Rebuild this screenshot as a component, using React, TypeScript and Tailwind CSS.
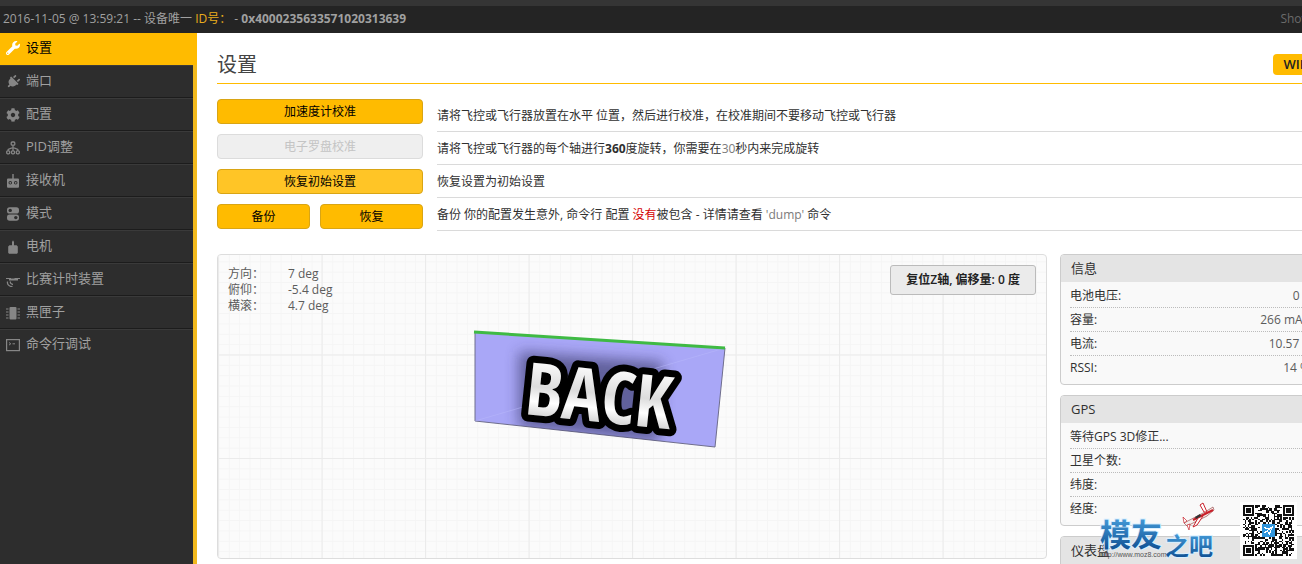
import type { ReactNode } from "react";
import { FaCog, FaPlug, FaWrench } from "react-icons/fa";

const navItems: { label: string; icon: ReactNode }[] = [
  { label: "设置", icon: <FaWrench className="h-3.5 w-3.5" /> },
  { label: "端口", icon: <FaPlug className="h-3.5 w-3.5 rotate-45" /> },
  { label: "配置", icon: <FaCog className="h-3.5 w-3.5" /> },
  { label: "PID调整", icon: <TreeIcon /> },
  { label: "接收机", icon: <ReceiverIcon /> },
  { label: "模式", icon: <ModesIcon /> },
  { label: "电机", icon: <MotorIcon /> },
  { label: "比赛计时装置", icon: <TransponderIcon /> },
  { label: "黑匣子", icon: <ChipIcon /> },
  { label: "命令行调试", icon: <TerminalIcon /> },
];

const attitude = [
  ["方向：", "7 deg"],
  ["俯仰：", "-5.4 deg"],
  ["横滚：", "4.7 deg"],
];

const infoRows = [
  ["电池电压:", "0 V"],
  ["容量:", "266 mAh"],
  ["电流:", "10.57 A"],
  ["RSSI:", "14 %"],
];

const gpsRows = [
  ["等待GPS 3D修正...", ""],
  ["卫星个数:", ""],
  ["纬度:", ""],
  ["经度:", ""],
];

function TreeIcon() {
  return (
    <svg viewBox="0 0 14 14" className="h-3.5 w-3.5" fill="none" stroke="currentColor" strokeWidth="1.3" aria-hidden>
      <rect x="5.2" y="1" width="3.6" height="3.2" rx="1" />
      <rect x="0.7" y="9.8" width="3" height="3" rx="1" />
      <rect x="5.5" y="9.8" width="3" height="3" rx="1" />
      <rect x="10.3" y="9.8" width="3" height="3" rx="1" />
      <path d="M7 4.2v5.6M2.2 9.8V8.4L7 6.4l4.8 2v1.4" />
    </svg>
  );
}

function ReceiverIcon() {
  return (
    <svg viewBox="0 0 14 14" className="h-3.5 w-3.5" fill="currentColor" aria-hidden>
      <path
        fillRule="evenodd"
        d="M6.3 0h1.4v4.5H12a1 1 0 0 1 1 1v7.3a1 1 0 0 1-1 1H2a1 1 0 0 1-1-1V5.5a1 1 0 0 1 1-1h4.3zM4.3 7a1.8 1.8 0 1 0 0 3.6 1.8 1.8 0 0 0 0-3.6zm5.4 0a1.8 1.8 0 1 0 0 3.6 1.8 1.8 0 0 0 0-3.6z"
      />
      <circle cx="4.3" cy="8.8" r="0.9" />
      <circle cx="9.7" cy="8.8" r="0.9" />
    </svg>
  );
}

function ModesIcon() {
  return (
    <svg viewBox="0 0 14 14" className="h-3.5 w-3.5" aria-hidden>
      <rect x="1" y="0.3" width="12" height="6.2" rx="2.6" fill="currentColor" />
      <rect x="1" y="7.5" width="12" height="6.2" rx="2.6" fill="currentColor" />
      <circle cx="4.2" cy="3.4" r="1.7" fill="#2d2d2d" />
      <circle cx="9.8" cy="10.6" r="1.7" fill="#2d2d2d" />
    </svg>
  );
}

function MotorIcon() {
  return (
    <svg viewBox="0 0 14 14" className="h-3.5 w-3.5" fill="currentColor" aria-hidden>
      <path d="M6 2 7 .3 8 2v3.3h2.6l1.2 1.2v6.3l-.8.9H3l-.8-.9V6.5l1.2-1.2H6z" />
    </svg>
  );
}

function TransponderIcon() {
  return (
    <svg viewBox="0 0 14 14" className="h-3.5 w-3.5" fill="none" stroke="currentColor" aria-hidden>
      <path d="M0 5.5h5M8.5 5.5H14" strokeWidth="1" />
      <path d="M3 6.5h9" strokeWidth="2" />
      <path d="M4.5 8.5c-.5 1.500.5 2.700 2.500 3M1.500 8.500c-.5 3 1.500 5 5 5.200" strokeWidth="1.3" />
    </svg>
  );
}

function ChipIcon() {
  return (
    <svg viewBox="0 0 14 14" className="h-3.5 w-3.5" fill="currentColor" aria-hidden>
      <rect x="3.5" y="1" width="7" height="12.5" rx="1" />
      <path d="M0 2.5h2.5v1H0zM0 5.5h2.5v1H0zM0 8.5h2.5v1H0zM0 11.5h2.5v1H0zM11.5 2.5H14v1h-2.5zM11.5 5.5H14v1h-2.5zM11.5 8.5H14v1h-2.5zM11.5 11.5H14v1h-2.5z" />
    </svg>
  );
}

function TerminalIcon() {
  return (
    <svg viewBox="0 0 14 14" className="h-3.5 w-3.5" fill="none" stroke="currentColor" aria-hidden>
      <rect x="0.6" y="1.6" width="12.8" height="11" strokeWidth="1.2" />
      <path d="M3 4.5l1.8 1.3L3 7.1M6.5 5.8H9" />
    </svg>
  );
}

function Sidebar() {
  return (
    <nav className="w-[197px] shrink-0 bg-[linear-gradient(to_right,#2d2d2d_193px,#f2b91d_193px)]">
      <ul>
        {navItems.map((item, i) => (
          <li key={item.label} className="group">
            <a
              href="#"
              className={
                i === 0
                  ? "flex h-8 items-center gap-1.5 bg-[#ffbb00] pb-0.5 pl-1.5 text-[13px] text-white"
                  : "mr-1 flex h-[33px] items-center gap-1.5 border-t border-b border-t-[#3a3a3a] border-b-[#1c1c1c] pl-1.5 text-[13px] text-[#868686] group-last:h-[31px] group-last:border-b-0"
              }
            >
              {item.icon}
              <span className={i === 0 ? "text-black" : "pb-0.5 text-[#a0a0a0]"}>{item.label}</span>
            </a>
          </li>
        ))}
      </ul>
    </nav>
  );
}

function Actions() {
  const yellow = "h-[25px] rounded border border-[#d9a514] bg-[#ffbb00] text-xs text-black";
  return (
    <div className="flex w-[206px] shrink-0 flex-col gap-2.5">
      <button className={yellow}>加速度计校准</button>
      <button disabled className="h-[25px] rounded border border-[#dcdcdc] bg-[#efefef] text-xs text-[#c4c4c4]">
        电子罗盘校准
      </button>
      <button className="h-[25px] rounded border border-[#d9a514] bg-[#ffc526] text-xs text-black">恢复初始设置</button>
      <div className="grid grid-cols-[93fr_103fr] gap-2.5">
        <button className={yellow}>备份</button>
        <button className={yellow}>恢复</button>
      </div>
    </div>
  );
}

function Descriptions() {
  const row = "flex h-[33px] items-center border-b border-[#dadada] pt-0.5 whitespace-pre";
  return (
    <div className="flex-1 text-xs text-[#303030]">
      <p className={row}>请将飞控或飞行器放置在水平 位置，然后进行校准，在校准期间不要移动飞控或飞行器</p>
      <p className={row}>
        请将飞控或飞行器的每个轴进行<b>360</b>度旋转，你需要在<span className="text-[#7b7b7b]">30</span>秒内来完成旋转
      </p>
      <p className={row}>恢复设置为初始设置</p>
      <p className={row}>
        备份 你的配置发生意外, 命令行 配置 <span className="text-[#d40000]">没有</span>被包含 - 详情请查看{" "}
        <span className="text-[#7b7b7b]">'dump'</span> 命令
      </p>
    </div>
  );
}

function GridPaper() {
  return (
    <svg className="absolute inset-0 h-full w-full" aria-hidden>
      <defs>
        <pattern id="minor" x="0.5" y="-4" width="10.35" height="10.35" patternUnits="userSpaceOnUse">
          <path d="M0 .5H10.35M.5 0V10.35" stroke="#f5f5f5" fill="none" />
        </pattern>
        <pattern id="major" x="0" y="-4" width="103.5" height="103.5" patternUnits="userSpaceOnUse">
          <path d="M0 .5H103.5M.5 0V103.5" stroke="#ebebeb" fill="none" />
        </pattern>
      </defs>
      <rect width="100%" height="100%" fill="url(#minor)" />
      <rect width="100%" height="100%" fill="url(#major)" />
    </svg>
  );
}

function Model() {
  return (
    <svg
      viewBox="0 0 254 120"
      className="absolute top-[75px] left-[255px] h-[120px] w-[254px]"
      role="img"
      aria-label="BACK"
    >
      <defs>
        <filter id="shade" x="-20%" y="-30%" width="140%" height="160%">
          <feGaussianBlur stdDeviation="7" />
        </filter>
        <linearGradient id="face" x1="0" x2="0" y1="0" y2="1">
          <stop offset="0.2" stopColor="#ffffff" />
          <stop offset="0.5" stopColor="#dcdcdc" />
          <stop offset="0.65" stopColor="#ffffff" />
          <stop offset="0.85" stopColor="#c4c4c4" />
        </linearGradient>
        <clipPath id="plane">
          <path d="M2 2 252 18 242 117 2 91Z" />
        </clipPath>
      </defs>
      <path d="M2 2 252 18 242 117 2 91Z" fill="#a9a7f7" stroke="#6f6e8c" />
      <g clipPath="url(#plane)">
        <path d="M46 22 190 32 186 112 46 97Z" fill="#33315f" opacity="0.6" filter="url(#shade)" />
      </g>
      <path d="M2 91 252 18" stroke="#b9b8fa" strokeWidth="0.5" />
      <path d="M1 2 252 18" stroke="#3fba44" strokeWidth="3" />
      <text
        x="51"
        y="84"
        fontSize="73"
        fontWeight="700"
        fontFamily="'Liberation Sans Narrow', 'Open Sans Condensed', 'Open Sans', sans-serif"
        fill="url(#face)"
        stroke="#000"
        strokeWidth="14"
        strokeLinejoin="round"
        paintOrder="stroke"
        transform="rotate(6 50 80)"
      >
        BACK
      </text>
    </svg>
  );
}

function Panel({ title, rows }: { title: string; rows: string[][] }) {
  return (
    <section className="overflow-hidden rounded border border-[#cccccc] bg-[#f9f9f9] pb-1">
      <h2 className="mb-0.5 flex h-[27px] items-center bg-[#e4e4e4] pl-2.5 text-[13px] text-[#303030]">{title}</h2>
      <dl className="mx-[9px] text-xs">
        {rows.map(([label, value]) => (
          <div
            key={label}
            className="flex h-6 items-center justify-between border-b border-dotted border-[#bcbcbc] last:border-b-0"
          >
            <dt className="text-[#303030]">{label}</dt>
            <dd className="pr-0.5 text-[#5c5c5c]">{value}</dd>
          </div>
        ))}
      </dl>
    </section>
  );
}

const QR_SIZE = 33;

function isFinder(x: number, y: number) {
  const inCorner = (cx: number, cy: number) => x >= cx && x < cx + 8 && y >= cy && y < cy + 8;
  return inCorner(0, 0) || inCorner(QR_SIZE - 8, 0) || inCorner(0, QR_SIZE - 8);
}

function qrModules() {
  let path = "";
  let seed = 77;
  for (let y = 0; y < QR_SIZE; y++) {
    for (let x = 0; x < QR_SIZE; x++) {
      seed = (seed * 1103515245 + 12345) % 2147483648;
      const inLogo = x > 11 && x < 21 && y > 11 && y < 21;
      if (!isFinder(x, y) && !inLogo && seed / 2147483648 > 0.48) path += `M${x} ${y}h1v1h-1z`;
    }
  }
  return path;
}

function QrCode() {
  return (
    <svg viewBox="-2 -2 37 37" className="h-[57px] w-[57px]" shapeRendering="crispEdges" aria-hidden>
      <rect x="-2" y="-2" width="37" height="37" fill="#fff" />
      <path d={qrModules()} fill="#111" />
      {[
        [0, 0],
        [26, 0],
        [0, 26],
      ].map(([x, y]) => (
        <g key={`${x}-${y}`} fill="#111">
          <path fillRule="evenodd" d={`M${x} ${y}h7v7h-7zM${x + 1} ${y + 1}v5h5v-5z`} />
          <rect x={x + 2} y={y + 2} width="3" height="3" />
        </g>
      ))}
      <rect x="12.5" y="12.5" width="8" height="8" fill="#2f95dc" />
      <path d="M14 18l5-4-2 5-1-2zM13.5 14.5l3 1" stroke="#fff" strokeWidth="0.7" fill="none" />
    </svg>
  );
}

function Watermark() {
  return (
    <div className="absolute right-[5px] bottom-[5px] flex items-end gap-[19px]">
      <svg viewBox="0 0 124 60" className="h-[60px] w-[124px]" aria-hidden>
        <defs>
          <linearGradient id="ink" x1="0" x2="0" y1="0" y2="1">
            <stop offset="0.1" stopColor="#4aa3e0" />
            <stop offset="0.9" stopColor="#0f4f92" />
          </linearGradient>
        </defs>
        <g
          fontFamily="'Noto Sans CJK SC', sans-serif"
          fontWeight="700"
          fill="url(#ink)"
          stroke="#d8efff"
          strokeWidth="2"
          paintOrder="stroke"
        >
          <text x="3" y="47" fontSize="31">模友</text>
          <text x="68" y="56" fontSize="24">之吧</text>
        </g>
        <text x="3" y="58" fontSize="7" fontFamily="'Liberation Sans', sans-serif" fill="#555">
          http://www.moz8.com
        </text>
        <g transform="translate(4 2)">
          <path d="M83 22 104 11l8-5 1 3-7 6-20 10z" fill="#f4f0ee" stroke="#8b3434" strokeWidth="0.6" />
          <path d="M92 19 112 9" stroke="#c9202a" strokeWidth="2" />
          <path d="M103 11 99 4l3-2 4 9zM102 15l-6 9-4 2 5-9z" fill="#fff" stroke="#c9202a" />
          <path d="M83 22l-1-6 4 4zM86 24l2 5 1-6z" fill="#fff" stroke="#c9202a" strokeWidth="0.7" />
          <path d="M94 16l5-3 1 2-5 3z" fill="#333" />
        </g>
      </svg>
      <QrCode />
    </div>
  );
}

export default function App() {
  return (
    <div className="relative h-screen overflow-hidden bg-white font-['Open_Sans','Noto_Sans_CJK_SC',sans-serif]">
      {/* The layout is a little wider than the window, so its right side runs off the edge */}
      <div className="-mr-10 flex h-full flex-col">
        <header className="flex h-[33px] shrink-0 items-center justify-between border-t-[6px] border-[#353535] bg-[#242424] pr-2 pb-0.5 pl-[3px] text-xs text-[#a0a0a0]">
          <p className="whitespace-pre">
            2016-11-05 @ 13:59:21 -- 设备唯一 <span className="text-[#e9ad1c]">ID号：</span> - <b>0x4000235633571020313639</b>
          </p>
          <a href="#" className="text-[#6b6b6b]">Show Log</a>
        </header>

        <div className="flex min-h-0 flex-1">
          <Sidebar />
          <main className="min-w-0 flex-1 px-5 pt-[13px]">
            <div className="flex h-[38px] items-center justify-between border-b border-[#ffbb00]">
              <h1 className="text-xl text-[#444444]">设置</h1>
              <button className="h-[21px] rounded bg-[#ffbb00] px-2.5 text-[13px] font-semibold text-[#222222]">WIKI</button>
            </div>

            <div className="mt-[15px] flex gap-3.5">
              <Actions />
              <Descriptions />
            </div>

            <div className="mt-[23px] grid grid-cols-[minmax(0,1fr)_262px] items-start gap-[13px]">
              <section className="relative h-[305px] overflow-hidden rounded border border-[#dddddd] bg-[#fbfbfb]">
                <GridPaper />
                <div className="relative flex items-start justify-between p-2.5">
                  <dl className="pt-px text-xs leading-4 text-[#5c5c5c]">
                    {attitude.map(([label, value]) => (
                      <div key={label} className="flex">
                        <dt className="w-[60px]">{label}</dt>
                        <dd>{value}</dd>
                      </div>
                    ))}
                  </dl>
                  <button className="h-[30px] rounded-[3px] border border-[#bbbbbb] bg-[#ebebeb] px-[15px] text-xs font-semibold text-[#222222]">
                    复位Z轴, 偏移量: 0 度
                  </button>
                </div>
                <Model />
              </section>

              <aside className="flex flex-col gap-2.5">
                <Panel title="信息" rows={infoRows} />
                <Panel title="GPS" rows={gpsRows} />
                <Panel title="仪表盘" rows={[]} />
              </aside>
            </div>
          </main>
        </div>
      </div>
      <Watermark />
    </div>
  );
}
